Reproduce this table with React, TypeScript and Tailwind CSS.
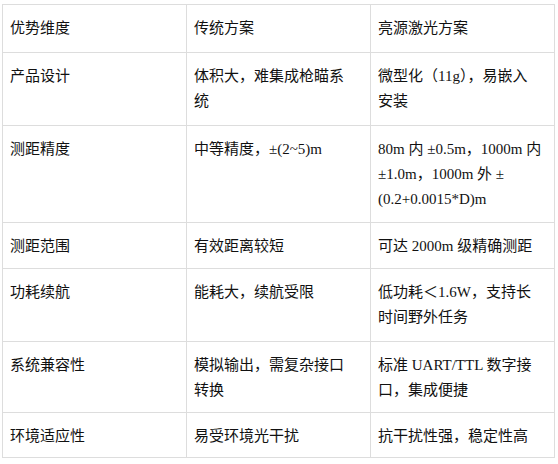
import React from 'react';

interface Row {
  dim: string;
  old: React.ReactNode;
  laser: React.ReactNode;
  h: string;
}

const rows: Row[] = [
  {
    dim: '产品设计',
    old: <>体积大，难集成枪瞄系<br />统</>,
    laser: <>微型化（11g），易嵌入<br />安装</>,
    h: 'h-[73px]',
  },
  {
    dim: '测距精度',
    old: '中等精度，±(2~5)m',
    laser: <>80m 内 ±0.5m，1000m 内<br />±1.0m，1000m 外 ±<br />(0.2+0.0015*D)m</>,
    h: 'h-[97px]',
  },
  { dim: '测距范围', old: '有效距离较短', laser: '可达 2000m 级精确测距', h: 'h-[46px]' },
  {
    dim: '功耗续航',
    old: '能耗大，续航受限',
    laser: <>低功耗＜1.6W，支持长<br />时间野外任务</>,
    h: 'h-[73px]',
  },
  {
    dim: '系统兼容性',
    old: <>模拟输出，需复杂接口<br />转换</>,
    laser: <>标准 UART/TTL 数字接<br />口，集成便捷</>,
    h: 'h-[71px]',
  },
  { dim: '环境适应性', old: '易受环境光干扰', laser: '抗干扰性强，稳定性高', h: 'h-[45px]' },
];

const cell = 'border border-[#dddddd] align-top pl-[7px] pr-[6px] pt-[11px] pb-[8px] whitespace-nowrap';

export default function App() {
  return (
    <div
      className="w-[558px] h-[464px] bg-white pl-[2px] pt-[4px] text-[15px] leading-[25px] text-[#111111]"
      style={{ fontFamily: '"Liberation Serif", "Noto Sans CJK SC", serif' }}
    >
      <table className="w-[553px] border-collapse table-fixed">
        <tbody>
          <tr className="h-[48px]">
            <td className={cell}>优势维度</td>
            <td className={cell}>传统方案</td>
            <td className={cell}>亮源激光方案</td>
          </tr>
          {rows.map((r, i) => (
            <tr key={i} className={r.h}>
              <td className={cell}>{r.dim}</td>
              <td className={cell}>{r.old}</td>
              <td className={cell}>{r.laser}</td>
            </tr>
          ))}
        </tbody>
      </table>
    </div>
  );
}
